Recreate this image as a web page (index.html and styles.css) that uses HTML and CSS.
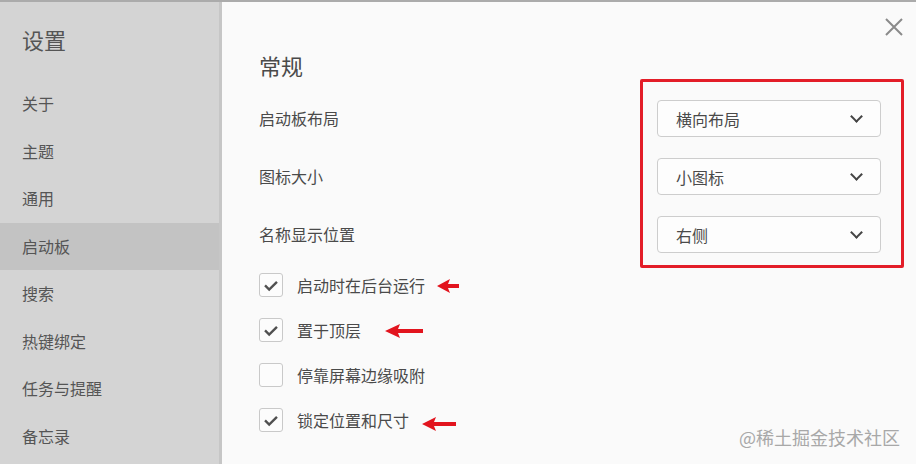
FILE: index.html
```html
<!DOCTYPE html>
<html>

<head>
    <meta charset=utf-8>
    <meta name="viewport" content="width=device-width, initial-scale=1">
    <title>设置</title>
    <link rel="stylesheet" href="styles.css">
</head>

<body>
    <div class="window">
        <aside class="sidebar">
            <h1 class="sidebar-title">设置</h1>
            <nav class="nav">
                <a class="nav-item">关于</a>
                <a class="nav-item">主题</a>
                <a class="nav-item">通用</a>
                <a class="nav-item active">启动板</a>
                <a class="nav-item">搜索</a>
                <a class="nav-item">热键绑定</a>
                <a class="nav-item">任务与提醒</a>
                <a class="nav-item">备忘录</a>
            </nav>
        </aside>

        <main class="panel">
            <button class="close" title="关闭">
                <svg width="18" height="18" viewBox="0 0 18 18">
                    <path d="M1 1 L17 17 M17 1 L1 17" stroke="#8a8a8a" stroke-width="2" fill="none" />
                </svg>
            </button>

            <h2 class="section-title">常规</h2>

            <div class="options">
                <div class="labels">
                    <div class="label">启动板布局</div>
                    <div class="label">图标大小</div>
                    <div class="label">名称显示位置</div>
                </div>
                <!-- red annotation box around the dropdowns -->
                <div class="marked">
                    <div class="select"><span>横向布局</span><i class="chevron"></i></div>
                    <div class="select"><span>小图标</span><i class="chevron"></i></div>
                    <div class="select"><span>右侧</span><i class="chevron"></i></div>
                </div>
            </div>

            <div class="checks">
                <label class="check">
                    <span class="box"><svg viewBox="0 0 24 24"><path d="M5.5 12.5 L10 17 L18.5 8.5" /></svg></span>启动时在后台运行
                    <svg class="arrow a1" width="22" height="14" viewBox="0 0 22 14">
                        <path d="M0 7 L13 0 L11 5 L22 5 L22 9 L11 9 L13 14 Z" fill="#e2141e" />
                    </svg>
                </label>
                <label class="check">
                    <span class="box"><svg viewBox="0 0 24 24"><path d="M5.5 12.5 L10 17 L18.5 8.5" /></svg></span>置于顶层
                    <svg class="arrow a2" width="38" height="14" viewBox="0 0 38 14">
                        <path d="M0 7 L15 0 L13 5 L38 5 L38 9 L13 9 L15 14 Z" fill="#e2141e" />
                    </svg>
                </label>
                <label class="check">
                    <span class="box"></span>停靠屏幕边缘吸附
                </label>
                <label class="check">
                    <span class="box"><svg viewBox="0 0 24 24"><path d="M5.5 12.5 L10 17 L18.5 8.5" /></svg></span>锁定位置和尺寸
                    <svg class="arrow a3" width="34" height="14" viewBox="0 0 34 14">
                        <path d="M0 7 L14 0 L12 5 L34 5 L34 9 L12 9 L14 14 Z" fill="#e2141e" />
                    </svg>
                </label>
            </div>

            <div class="watermark">@稀土掘金技术社区</div>
        </main>
    </div>
</body>

</html>
```

FILE: styles.css
```css
/* Whole page is one settings window */
html,
body {
    margin: 0;
    height: 100%;
}

body {
    font-family: "Noto Sans CJK SC", "Noto Sans", sans-serif;
    color: #4a4a4a;
    background-color: #fafafa;
}

.window {
    display: flex;
    height: 100vh;
    box-sizing: border-box;
    border-top: 2px solid #ababab;
}

/* Left menu */
.sidebar {
    width: 222px;
    flex-shrink: 0;
    box-sizing: border-box;
    background-color: #d4d4d4;
    border-right: 3px solid #c6c6c6;
    padding-top: 22px;
}

.sidebar-title {
    margin: 0 0 26.25px 22px;
    font-size: 22px;
    font-weight: normal;
    line-height: 30px;
    color: #555;
}

.nav {
    display: flex;
    flex-direction: column;
}

.nav-item {
    height: 47.5px;
    line-height: 47.5px;
    padding-left: 22px;
    font-size: 16px;
    color: #555;
}

.nav-item.active {
    background-color: #c3c3c3;
}

/* Right content */
.panel {
    flex: 1;
    position: relative;
    padding: 51px 0 0 37px;
    background-color: #fafafa;
}

.close {
    position: absolute;
    top: 16px;
    right: 13px;
    padding: 0;
    border: none;
    background: none;
    width: 18px;
    height: 18px;
    cursor: pointer;
}

.close svg {
    display: block;
}

.section-title {
    margin: 0 0 2px 0;
    font-size: 22px;
    font-weight: normal;
    line-height: 24px;
    color: #4a4a4a;
}

.options {
    display: flex;
    margin-right: 12px;
}

.labels {
    flex: 1;
    display: flex;
    flex-direction: column;
    gap: 21px;
    padding-top: 21px;
}

.label {
    height: 37px;
    line-height: 37px;
    font-size: 16px;
}

.marked {
    width: 264px;
    box-sizing: border-box;
    border: 3px solid #e31d28;
    border-radius: 2px;
    padding: 18px 20px 12px 14px;
    display: flex;
    flex-direction: column;
    gap: 21px;
}

.select {
    height: 37px;
    box-sizing: border-box;
    border: 1px solid #cdcdcd;
    border-radius: 4px;
    background-color: #fdfdfd;
    display: flex;
    align-items: center;
    justify-content: space-between;
    padding: 0 19px 0 18px;
    font-size: 16px;
    color: #4a4a4a;
}

/* dropdown chevron made from two borders */
.chevron {
    width: 7px;
    height: 7px;
    border-right: 2.8px solid #444;
    border-bottom: 2.8px solid #444;
    transform: rotate(45deg);
    margin-top: -5px;
}

/* Checkbox rows */
.checks {
    margin-top: 5px;
    display: flex;
    flex-direction: column;
    gap: 21px;
}

.check {
    display: flex;
    align-items: center;
    height: 24px;
    font-size: 16px;
    color: #4a4a4a;
}

.box {
    width: 24px;
    height: 24px;
    box-sizing: border-box;
    border: 1px solid #c9c9c9;
    border-radius: 3px;
    background-color: #fcfcfc;
    margin-right: 14px;
}

.box svg {
    display: block;
    width: 22px;
    height: 22px;
    fill: none;
    stroke: #505050;
    stroke-width: 2.6;
}

.arrow.a1 {
    margin-left: 12px;
    margin-top: 2px;
}

.arrow.a2 {
    margin-left: 24px;
    margin-top: 2px;
}

.arrow.a3 {
    margin-left: 13px;
    margin-top: 8px;
}

.watermark {
    position: absolute;
    right: 16px;
    bottom: 14px;
    font-size: 18px;
    color: #a8a8a8;
}
```
